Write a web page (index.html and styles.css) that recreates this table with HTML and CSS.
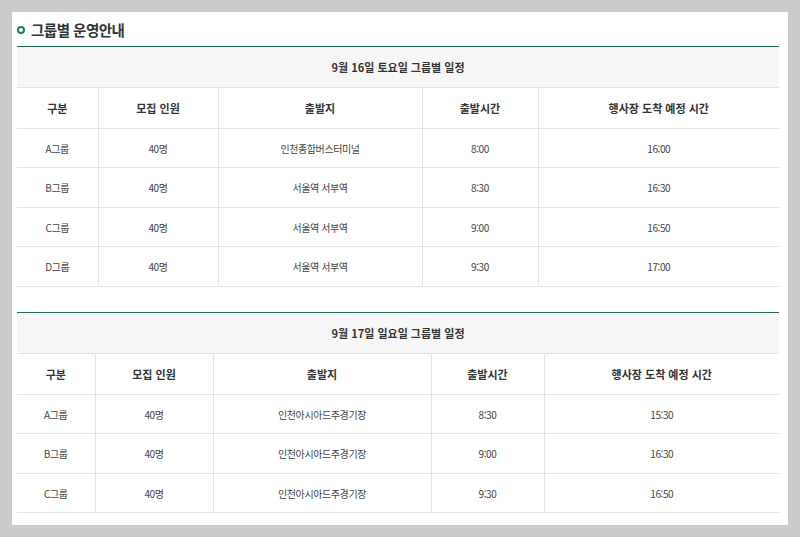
FILE: index.html
```html
<!DOCTYPE html>
<html lang="ko">
<head>
<meta charset="utf-8">
<link rel="stylesheet" href="styles.css">
</head>
<body>
<div class="panel">
  <h2 class="title"><span class="dot"></span>그룹별 운영안내</h2>
  <table class="sched t1">
    <colgroup><col class="c1"><col class="c2"><col class="c3"><col class="c4"><col class="c5"></colgroup>
    <thead>
      <tr class="cap"><th colspan="5">9월 16일 토요일 그룹별 일정</th></tr>
      <tr class="head"><th>구분</th><th>모집 인원</th><th>출발지</th><th>출발시간</th><th>행사장 도착 예정 시간</th></tr>
    </thead>
    <tbody>
      <tr><td>A그룹</td><td>40명</td><td>인천종합버스터미널</td><td>8:00</td><td>16:00</td></tr>
      <tr><td>B그룹</td><td>40명</td><td>서울역 서부역</td><td>8:30</td><td>16:30</td></tr>
      <tr><td>C그룹</td><td>40명</td><td>서울역 서부역</td><td>9:00</td><td>16:50</td></tr>
      <tr><td>D그룹</td><td>40명</td><td>서울역 서부역</td><td>9:30</td><td>17:00</td></tr>
    </tbody>
  </table>
  <table class="sched t2">
    <colgroup><col class="c1"><col class="c2"><col class="c3"><col class="c4"><col class="c5"></colgroup>
    <thead>
      <tr class="cap"><th colspan="5">9월 17일 일요일 그룹별 일정</th></tr>
      <tr class="head"><th>구분</th><th>모집 인원</th><th>출발지</th><th>출발시간</th><th>행사장 도착 예정 시간</th></tr>
    </thead>
    <tbody>
      <tr><td>A그룹</td><td>40명</td><td>인천아시아드주경기장</td><td>8:30</td><td>15:30</td></tr>
      <tr><td>B그룹</td><td>40명</td><td>인천아시아드주경기장</td><td>9:00</td><td>16:30</td></tr>
      <tr><td>C그룹</td><td>40명</td><td>인천아시아드주경기장</td><td>9:30</td><td>16:50</td></tr>
    </tbody>
  </table>
</div>
</body>
</html>
```

FILE: styles.css
```css
html, body {
  margin: 0;
  padding: 0;
  background: #cbcbcb;
}
body {
  padding: 12px;
  font-family: "Noto Sans CJK KR", "Noto Sans", sans-serif;
  color: #444;
}
.panel {
  background: #fff;
  width: 776px;
  height: 513px;
  padding: 0 5px;
  box-sizing: border-box;
}
.title {
  margin: 0;
  padding-top: 4px;
  height: 30px;
  box-sizing: border-box;
  display: flex;
  align-items: center;
  gap: 6px;
  font-size: 14.5px;
  font-weight: 700;
  letter-spacing: -0.5px;
  color: #333;
}
.dot {
  width: 4px;
  height: 4px;
  border: 2px solid #1d7a5f;
  border-radius: 50%;
  margin-top: 1px;
}
.sched {
  width: 762px;
  table-layout: fixed;
  border-collapse: collapse;
  border-top: 1px solid #1d6b57;
  margin-top: 4px;
}
.t2 { margin-top: 25px; }
.t1 .c1 { width: 81px; }
.t1 .c2 { width: 120px; }
.t1 .c3 { width: 204px; }
.t1 .c4 { width: 116px; }
.t1 .c5 { width: 241px; }
.t2 .c1 { width: 78px; }
.t2 .c2 { width: 118px; }
.t2 .c3 { width: 218px; }
.t2 .c4 { width: 113px; }
.t2 .c5 { width: 235px; }
.sched th, .sched td {
  padding: 0;
  text-align: center;
  border-bottom: 1px solid #e3e3e3;
}
.sched .cap th {
  height: 40px;
  background: #f7f7f7;
  font-size: 11px;
  font-weight: 700;
  color: #333;
}
.sched .head th {
  height: 40px;
  font-size: 11px;
  font-weight: 700;
  color: #333;
  border-left: 1px solid #e3e3e3;
}
.sched td {
  height: 38px;
  font-size: 10px;
  letter-spacing: -0.4px;
  color: #444;
  border-left: 1px solid #e3e3e3;
}
.sched tbody tr:nth-child(even) td {
  height: 39px;
}
.sched .head th:first-child,
.sched td:first-child {
  border-left: none;
}
```
